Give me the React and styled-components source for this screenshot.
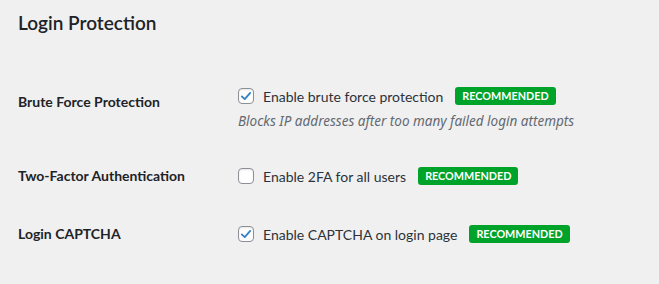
import React from "react";
import styled, { createGlobalStyle } from "styled-components";

const GlobalStyle = createGlobalStyle`
  html, body {
    margin: 0;
    background: #f0f0f1;
  }
  body {
    font-family: Lato, "Noto Sans", sans-serif;
    color: #1d2327;
  }
`;

const Wrap = styled.div`
  padding: 0 18px;
  width: 659px;
  height: 284px;
  box-sizing: border-box;
`;

const Title = styled.h2`
  font-size: 19px;
  font-weight: 600;
  line-height: 26px;
  margin: 10px 0 0;
`;

const Table = styled.div`
  margin-top: 49px;
`;

const Row = styled.div`
  display: grid;
  grid-template-columns: 220px 1fr;
  align-items: start;
  margin-top: ${(p) => p.$gap || 0}px;
`;

const Label = styled.div`
  font-size: 14px;
  font-weight: 700;
  line-height: 22px;
  padding-top: ${(p) => p.$shift || 0}px;
`;

const Field = styled.div`
  display: flex;
  flex-direction: column;
`;

const CheckLine = styled.label`
  display: flex;
  align-items: center;
  height: 22px;
  font-size: 14px;
  color: #2c3338;
`;

const Box = styled.span`
  width: 16px;
  height: 16px;
  box-sizing: border-box;
  border: 1px solid #8c8f94;
  border-radius: 4px;
  background: #fff;
  box-shadow: inset 0 1px 2px rgba(0, 0, 0, 0.1);
  margin-right: 9px;
  display: flex;
  align-items: center;
  justify-content: center;
  flex-shrink: 0;
`;

const Badge = styled.span`
  margin-left: 12px;
  background: #00a32a;
  color: #fff;
  font-size: 10.8px;
  font-weight: 700;
  line-height: 18px;
  padding: 0 7px;
  border-radius: 3px;
`;

const Desc = styled.p`
  margin: 4px 0 0;
  font-family: "Noto Sans", sans-serif;
  font-size: 13.5px;
  font-style: italic;
  line-height: 20px;
  color: #646970;
`;

function Checkbox({ checked }) {
  return (
    <Box>
      {checked && (
        <svg width="14" height="14" viewBox="0 0 20 20">
          <path
            d="M4 10.5 L8.2 14.5 L16 5.5"
            fill="none"
            stroke="#3582c4"
            strokeWidth="2.6"
            strokeLinecap="round"
            strokeLinejoin="round"
          />
        </svg>
      )}
    </Box>
  );
}

const rows = [
  {
    label: "Brute Force Protection",
    text: "Enable brute force protection",
    checked: true,
    desc: "Blocks IP addresses after too many failed login attempts",
    shift: 6,
    gap: 0,
  },
  {
    label: "Two-Factor Authentication",
    text: "Enable 2FA for all users",
    checked: false,
    shift: 0,
    gap: 34,
  },
  {
    label: "Login CAPTCHA",
    text: "Enable CAPTCHA on login page",
    checked: true,
    shift: 0,
    gap: 36,
  },
];

export default function App() {
  return (
    <Wrap>
      <GlobalStyle />
      <Title>Login Protection</Title>
      <Table>
        {rows.map((r) => (
          <Row key={r.label} $gap={r.gap}>
            <Label $shift={r.shift}>{r.label}</Label>
            <Field>
              <CheckLine>
                <Checkbox checked={r.checked} />
                {r.text}
                <Badge>RECOMMENDED</Badge>
              </CheckLine>
              {r.desc && <Desc>{r.desc}</Desc>}
            </Field>
          </Row>
        ))}
      </Table>
    </Wrap>
  );
}
